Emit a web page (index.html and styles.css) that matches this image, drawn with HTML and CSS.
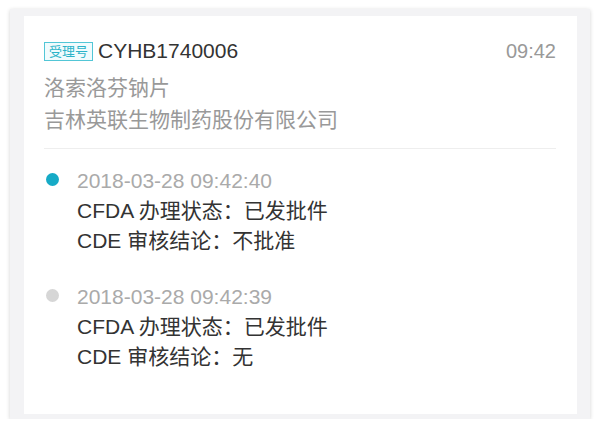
FILE: index.html
```html
<!DOCTYPE html>
<html lang="zh-CN">
<head>
  <meta charset="UTF-8" />
  <meta name="viewport" content="width=device-width, initial-scale=1.0"/>
  <title>受理号 CYHB1740006</title>
  <link rel="stylesheet" href="styles.css">
</head>
<body>
  <div class="frame">
    <div class="card">
      <div class="head">
        <div class="title">
          <span class="badge">受理号</span>
          <span class="code">CYHB1740006</span>
        </div>
        <span class="time">09:42</span>
      </div>
      <p class="meta">洛索洛芬钠片</p>
      <p class="meta">吉林英联生物制药股份有限公司</p>

      <ul class="timeline">
        <li class="item current">
          <span class="dot"></span>
          <div class="body">
            <div class="date">2018-03-28 09:42:40</div>
            <div>CFDA 办理状态：已发批件</div>
            <div>CDE 审核结论：不批准</div>
          </div>
        </li>
        <li class="item">
          <span class="dot"></span>
          <div class="body">
            <div class="date">2018-03-28 09:42:39</div>
            <div>CFDA 办理状态：已发批件</div>
            <div>CDE 审核结论：无</div>
          </div>
        </li>
      </ul>
    </div>
  </div>
</body>
</html>
```

FILE: styles.css
```css
body { margin: 0; background: #fff; font-family: "Liberation Sans", "Noto Sans CJK SC", sans-serif; color: #333; font-size: 21px; }
.frame { margin: 9px 14px 0 10px; padding: 7px 13px 5px 14px; background: #f3f3f5; box-shadow: 0 1px 4px rgba(0,0,0,0.18); }
.card { background: #fff; padding: 19px 21px 42px 20px; }
.head { display: flex; justify-content: space-between; align-items: center; line-height: 32px; margin-bottom: 5px; }
.title { display: flex; align-items: center; gap: 5px; }
.badge { font-size: 13px; line-height: 17px; padding: 0 4px; border: 1px solid #52c6d6; color: #2bb3c8; background: #f0fbfd; }
.code { color: #333; }
.time { font-size: 20px; color: #999; }
.meta { margin: 0; line-height: 32px; color: #999; }
.timeline { list-style: none; margin: 12px 0 0; padding: 17px 0 0; border-top: 1px solid #eee; }
.item { display: flex; margin-bottom: 26px; line-height: 30px; }
.item:last-child { margin-bottom: 0; }
.dot { width: 13px; height: 13px; border-radius: 50%; background: #d6d6d6; margin: 7px 18px 0 2px; flex: none; }
.current .dot { background: #16aac6; }
.date { color: #aaa; }
```
